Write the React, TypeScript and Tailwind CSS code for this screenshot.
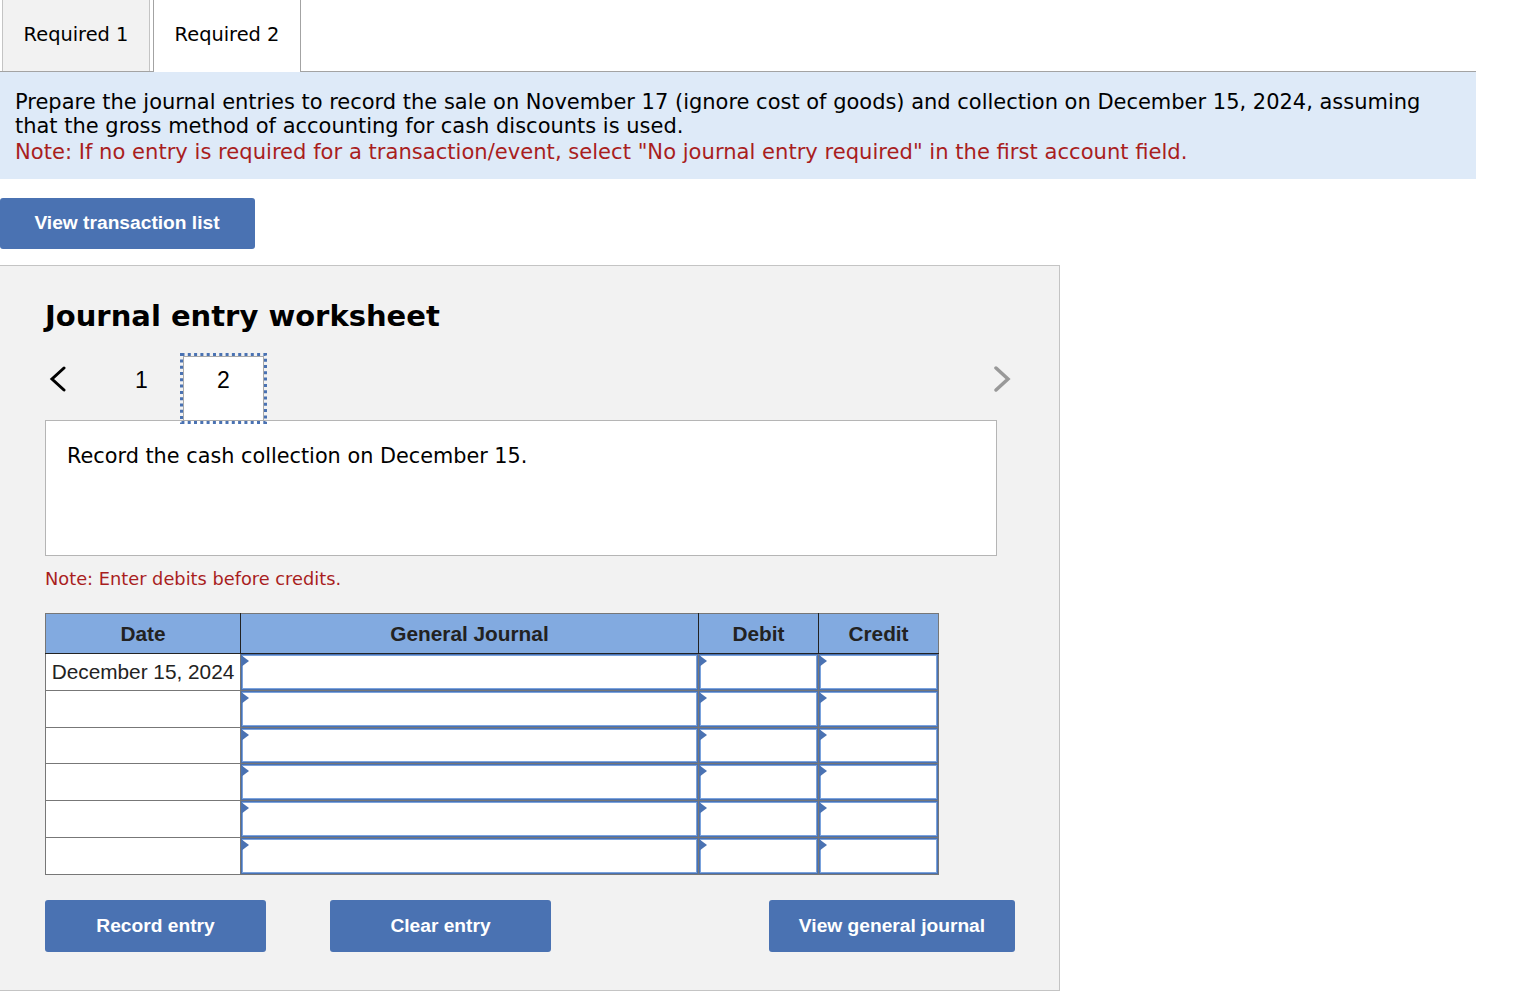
const verdana = 'font-["DejaVu_Sans",sans-serif]';
const arial = 'font-["Liberation_Sans",Arial,sans-serif]';

// the rows in the picture are not all the same height
const rows = [
  { date: 'December 15, 2024', cell: 'h-[37px]', inner: 'h-[34px]' },
  { date: '', cell: 'h-[37px]', inner: 'h-[34px]' },
  { date: '', cell: 'h-[36px]', inner: 'h-[33px]' },
  { date: '', cell: 'h-[37px]', inner: 'h-[34px]' },
  { date: '', cell: 'h-[37px]', inner: 'h-[34px]' },
  { date: '', cell: 'h-[37px]', inner: 'h-[34px]' },
];

function EntryCell({ cell, inner }: { cell: string; inner: string }) {
  return (
    <td className={`relative border border-[#777] bg-[#4a72b2] p-[1px] ${cell}`}>
      <div className={`border border-[#7ba3dd] bg-white ${inner}`} />
      <span className="absolute left-0 top-[1px] h-0 w-0 border-y-[6px] border-l-[8px] border-y-transparent border-l-[#4a72b2]" />
    </td>
  );
}

function BlueButton({ label, className }: { label: string; className: string }) {
  return (
    <button className={`flex items-center justify-center rounded-[3px] bg-[#4a72b2] text-[19.2px] font-bold text-white ${arial} ${className}`}>
      {label}
    </button>
  );
}

export default function App() {
  return (
    <div className={`min-h-[1008px] bg-white text-black ${verdana}`}>
      {/* Tabs */}
      <div className="flex h-[72px] w-[1476px] border-b border-[#a3a3a3] pl-[2px]">
        <div className="flex h-[71px] w-[148px] items-center justify-center border-x border-[#c4c4c4] bg-[#f2f2f2] pb-[2px] text-[19.4px]">
          Required 1
        </div>
        <div className="ml-[3px] flex h-[72px] w-[148px] items-center justify-center border-x border-[#a3a3a3] bg-white pb-[2px] text-[19.4px]">
          Required 2
        </div>
      </div>

      {/* Instructions */}
      <div className="h-[107px] w-[1476px] bg-[#deeaf8] px-[15px] pt-[18px] text-[20.97px] leading-[24px]">
        <p>
          Prepare the journal entries to record the sale on November 17 (ignore cost of goods) and collection on December 15, 2024, assuming that the gross method of accounting for cash discounts is used.
        </p>
        <p className="mt-[2px] text-[21.1px] text-[#a91e1e]">
          Note: If no entry is required for a transaction/event, select "No journal entry required" in the first account field.
        </p>
      </div>

      <BlueButton label="View transaction list" className="mt-[19px] h-[51px] w-[255px] pr-[1px]" />

      {/* Worksheet panel */}
      <div className="mt-[16px] h-[726px] w-[1060px] border-y border-r border-[#c4c4c4] bg-[#f2f2f2] pl-[45px]">
        <h2 className="pt-[30px] text-[29px] font-bold leading-[40px]">Journal entry worksheet</h2>

        <div className="relative mt-[17px] flex h-[67px] w-[952px] items-start">
          <svg width="18" height="28" viewBox="0 0 18 28" className="mt-[13px] ml-[4px]" fill="none" stroke="#000" strokeWidth="3" strokeLinecap="round">
            <path d="M15 2 L3 13 L15 24" />
          </svg>
          <span className={`ml-[68px] mt-[10px] text-[23px] ${arial}`}>1</span>
          <div className="absolute left-[135px] top-0 z-10 h-[71px] w-[87px] p-[3px]">
            <div className={`flex h-full justify-center border border-[#aaa] bg-white pt-[6px] text-[23px] ${arial}`}>2</div>
            <svg className="absolute left-0 top-0" width="87" height="71" fill="none" stroke="#4a72b2" strokeWidth="3" strokeDasharray="3 3.3">
              <rect x="1.5" y="1.5" width="84" height="68" />
            </svg>
          </div>
          <svg width="18" height="28" viewBox="0 0 18 28" className="absolute right-[-14px] top-[13px]" fill="none" stroke="#999" strokeWidth="3.5" strokeLinecap="round">
            <path d="M3 2 L15 13 L3 24" />
          </svg>
        </div>

        <div className="h-[136px] w-[952px] border border-[#b5b5b5] bg-white px-[21px] pt-[21px] text-[20.8px] leading-[28px]">
          Record the cash collection on December 15.
        </div>

        <p className="mt-[12px] text-[17.8px] leading-[22px] text-[#a91e1e]">Note: Enter debits before credits.</p>

        <table className={`mt-[23px] w-[894px] table-fixed border-collapse ${arial}`}>
          <thead>
            <tr className="h-[40px] bg-[#82aae0] text-[20.8px] font-bold text-[#222]">
              <th className="w-[195px] border border-[#777] border-r-[#222] border-b-[#222]">Date</th>
              <th className="w-[458px] border border-[#777] border-x-[#222] border-b-[#222]">General Journal</th>
              <th className="w-[120px] border border-[#777] border-x-[#222] border-b-[#222]">Debit</th>
              <th className="w-[120px] border border-[#777] border-l-[#222] border-b-[#222]">Credit</th>
            </tr>
          </thead>
          <tbody>
            {rows.map((row, i) => (
              <tr key={i}>
                <td className={`border border-[#777] bg-white p-0 pb-[1px] text-center text-[20.8px] text-[#222] ${row.cell}`}>{row.date}</td>
                <EntryCell cell={row.cell} inner={row.inner} />
                <EntryCell cell={row.cell} inner={row.inner} />
                <EntryCell cell={row.cell} inner={row.inner} />
              </tr>
            ))}
          </tbody>
        </table>

        <div className="mt-[25px] flex h-[52px] w-[970px]">
          <BlueButton label="Record entry" className="h-[52px] w-[221px]" />
          <BlueButton label="Clear entry" className="ml-[64px] h-[52px] w-[221px]" />
          <BlueButton label="View general journal" className="ml-auto h-[52px] w-[246px]" />
        </div>
      </div>
    </div>
  );
}
